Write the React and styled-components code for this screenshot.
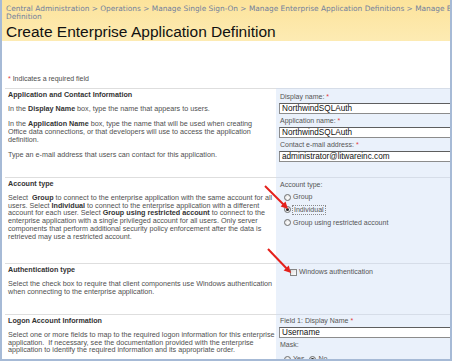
import React from "react";
import styled, { createGlobalStyle } from "styled-components";

const GlobalStyle = createGlobalStyle`
  body {
    margin: 0;
    background: #ffffff;
    font-family: "Liberation Sans", Arial, sans-serif;
  }
`;

const App = () => {
  return (
    <>
      <GlobalStyle />
      <Frame>
        <Header>
          <Crumbs>
            Central Administration &gt; Operations &gt; Manage Single Sign-On &gt; Manage Enterprise Application Definitions &gt; Manage Enterprise Application
            <br />
            Definition
          </Crumbs>
          <PageTitle>Create Enterprise Application Definition</PageTitle>
        </Header>

        <Intro>
          <Req>*</Req> Indicates a required field
        </Intro>

        <Form>
          <Section height={89}>
            <Description>
              <SectionTitle>Application and Contact Information</SectionTitle>
              <Para>
                In the <b>Display Name</b> box, type the name that appears to users.
              </Para>
              <Para>
                In the <b>Application Name</b> box, type the name that will be used when creating
                <br />
                Office data connections, or that developers will use to access the application
                <br />
                definition.
              </Para>
              <Para>Type an e-mail address that users can contact for this application.</Para>
            </Description>
            <Controls pad={4}>
              <Field>
                <Label>
                  Display name: <Req>*</Req>
                </Label>
                <TextBox>NorthwindSQLAuth</TextBox>
              </Field>
              <Field>
                <Label>
                  Application name: <Req>*</Req>
                </Label>
                <TextBox>NorthwindSQLAuth</TextBox>
              </Field>
              <Field>
                <Label>
                  Contact e-mail address: <Req>*</Req>
                </Label>
                <TextBox>administrator@litwareinc.com</TextBox>
              </Field>
            </Controls>
          </Section>

          <Section height={86}>
            <Description>
              <SectionTitle>Account type</SectionTitle>
              <Para>
                Select&nbsp; <b>Group</b> to connect to the enterprise application with the same account for all
                <br />
                users. Select <b>Individual</b> to connect to the enterprise application with a different
                <br />
                account for each user. Select <b>Group using restricted account</b> to connect to the
                <br />
                enterprise application with a single privileged account for all users. Only server
                <br />
                components that perform additional security policy enforcement after the data is
                <br />
                retrieved may use a restricted account.
              </Para>
            </Description>
            <Controls pad={3}>
              <Label>Account type:</Label>
              <Options>
                <Option>
                  <Radio />
                  <span>Group</span>
                </Option>
                <Option>
                  <Radio checked />
                  <Focused>Individual</Focused>
                </Option>
                <Option>
                  <Radio />
                  <span>Group using restricted account</span>
                </Option>
              </Options>
            </Controls>
          </Section>

          <Section height={51}>
            <Description>
              <SectionTitle>Authentication type</SectionTitle>
              <Para>
                Select the check box to require that client components use Windows authentication
                <br />
                when connecting to the enterprise application.
              </Para>
            </Description>
            <Controls pad={4}>
              <CheckRow>
                <CheckBox />
                <span>Windows authentication</span>
              </CheckRow>
            </Controls>
          </Section>

          <Section height={60}>
            <Description>
              <SectionTitle>Logon Account Information</SectionTitle>
              <Para>
                Select one or more fields to map to the required logon information for this enterprise
                <br />
                application.&nbsp; If necessary, see the documentation provided with the enterprise
                <br />
                application to identify the required information and its appropriate order.
              </Para>
            </Description>
            <Controls pad={2}>
              <Field>
                <Label>
                  Field 1: Display Name <Req>*</Req>
                </Label>
                <TextBox>Username</TextBox>
              </Field>
              <Label>Mask:</Label>
              <InlineOptions>
                <Option>
                  <Radio />
                  <span>Yes</span>
                </Option>
                <Option>
                  <Radio checked />
                  <span>No</span>
                </Option>
              </InlineOptions>
            </Controls>
          </Section>
        </Form>

        <Arrows viewBox="0 0 452 361" width="452" height="361">
          <line x1="263" y1="186" x2="281.5" y2="204.5" stroke="#e4201b" strokeWidth="2" />
          <polygon points="286,209 278.6,206.5 283.5,201.6" fill="#e4201b" />
          <line x1="266" y1="249" x2="284.4" y2="268.2" stroke="#e4201b" strokeWidth="2" />
          <polygon points="289,273 281.6,270.4 286.7,265.5" fill="#e4201b" />
        </Arrows>
      </Frame>
    </>
  );
};

export default App;

const Frame = styled.div`
  position: relative;
  width: 452px;
  height: 361px;
  box-sizing: border-box;
  border: 2px solid #a6bad6;
  border-top: none;
  overflow: hidden;
  background: #ffffff;
`;

const Header = styled.div`
  height: 41px;
  box-sizing: border-box;
  padding: 5px 0 0 4px;
  background: linear-gradient(#fce39b, #fdebb3);
  white-space: nowrap;
`;

const Crumbs = styled.div`
  font-family: "DejaVu Sans", Verdana, sans-serif;
  font-size: 7.4px;
  line-height: 8px;
  color: #72809c;
`;

const PageTitle = styled.div`
  margin-top: 3px;
  font-size: 15.5px;
  line-height: 16px;
  color: #111111;
`;

const Intro = styled.div`
  height: 47px;
  box-sizing: border-box;
  padding: 34px 0 0 6px;
  font-size: 7px;
  line-height: 8px;
  color: #4d4d4d;
`;

const Req = styled.span`
  color: #e23b3b;
`;

const Form = styled.div`
  margin-left: 3px;
`;

const Section = styled.div`
  display: grid;
  grid-template-columns: 271px 1fr;
  height: ${(p) => p.height}px;
`;

const Description = styled.div`
  border-top: 1px solid #dedede;
  padding: 2px 0 0 3px;
  color: #4f4f4f;
  font-size: 7.2px;
  line-height: 7.8px;
  white-space: nowrap;
`;

const SectionTitle = styled.div`
  font-weight: bold;
  color: #333333;
  margin-bottom: 6px;
`;

const Para = styled.p`
  margin: 0 0 7.5px;
  b {
    color: #333333;
  }
`;

const Controls = styled.div`
  border-top: 1px solid #d6dde8;
  background: #eaf1fb;
  padding: ${(p) => p.pad}px 0 0 4px;
  font-size: 7px;
  line-height: 7.8px;
  color: #555555;
  white-space: nowrap;
`;

const Field = styled.div`
  margin-bottom: 3.2px;
`;

const Label = styled.div`
  margin-bottom: 2px;
`;

const TextBox = styled.div`
  width: 200px;
  height: 11px;
  box-sizing: border-box;
  margin-left: -1px;
  padding-left: 2px;
  border: 1px solid #8c8c8c;
  border-top-color: #5e5e5e;
  background: #ffffff;
  font-size: 8.2px;
  line-height: 9px;
  color: #111111;
`;

const Options = styled.div`
  display: flex;
  flex-direction: column;
  margin-left: 4px;
`;

const InlineOptions = styled.div`
  display: flex;
  gap: 5px;
  margin-left: 4px;
  margin-top: 4px;
`;

const Option = styled.div`
  display: flex;
  align-items: center;
  gap: 2px;
  height: 12.7px;
`;

const Radio = styled.span`
  position: relative;
  width: 7px;
  height: 7px;
  box-sizing: border-box;
  border-radius: 50%;
  border: 1px solid #6f6f6f;
  background: radial-gradient(circle at 60% 60%, #ffffff, #dcdcdc);

  &::after {
    content: "";
    display: ${(p) => (p.checked ? "block" : "none")};
    position: absolute;
    left: 1px;
    top: 1px;
    width: 3px;
    height: 3px;
    border-radius: 50%;
    background: #222222;
  }
`;

const Focused = styled.span`
  padding: 0 1px;
  outline: 1px dotted #8a8a8a;
  outline-offset: 0;
  color: #555555;
`;

const CheckRow = styled.div`
  display: flex;
  align-items: center;
  gap: 2px;
  margin-left: 10px;
  height: 8px;
`;

const CheckBox = styled.span`
  width: 7px;
  height: 7px;
  box-sizing: border-box;
  border: 1px solid #858585;
  background: linear-gradient(135deg, #dcdcdc, #ffffff);
`;

const Arrows = styled.svg`
  position: absolute;
  left: 0;
  top: 0;
  pointer-events: none;
`;
